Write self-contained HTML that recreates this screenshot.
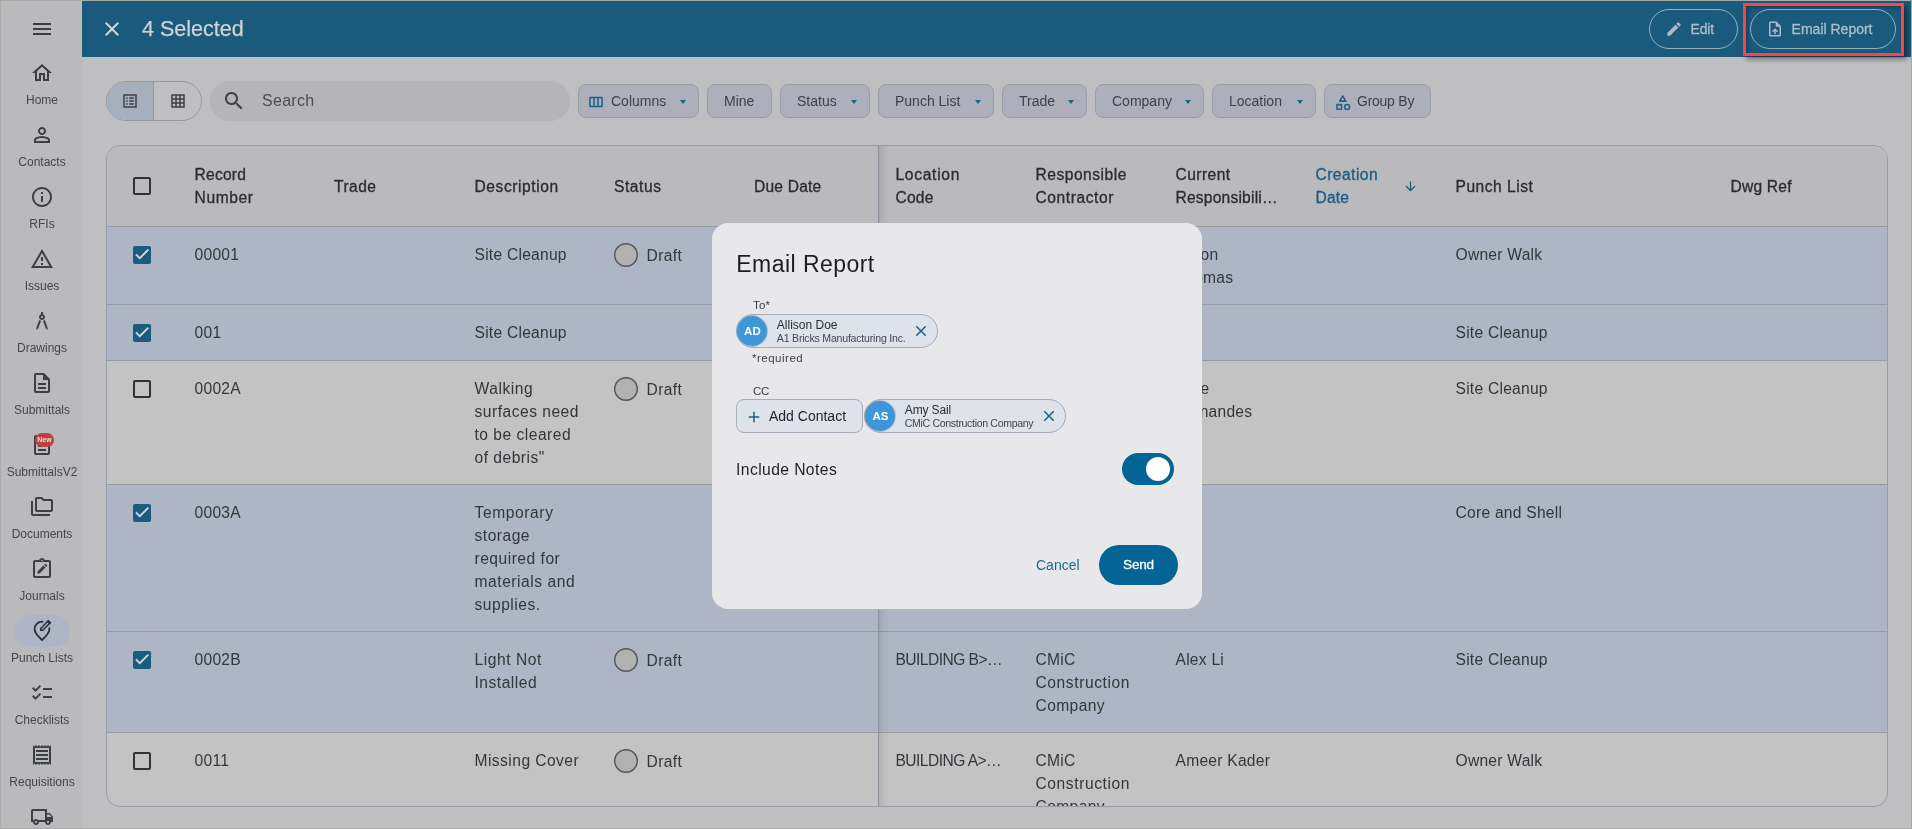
<!DOCTYPE html>
<html lang="en">
<head>
<meta charset="utf-8">
<title>Punch Lists - Email Report</title>
<style>
*{box-sizing:border-box;margin:0;padding:0}
html,body{width:1912px;height:829px;overflow:hidden;background:#bfbfc1}
body{font-family:"Liberation Sans",sans-serif;color:#35383c;position:relative}
#frame{will-change:transform;position:absolute;left:0;top:0;width:1912px;height:829px;overflow:hidden;background:#bfbfc1}
#edge{position:absolute;left:0;top:0;width:1912px;height:829px;border:1px solid #a9a9a9;z-index:50;pointer-events:none}
.abs{position:absolute}
/* sidebar */
#side{position:absolute;left:1px;top:1px;width:81px;height:827px;background:#bababc}
.nav{position:absolute;left:0;width:81px;text-align:center;font-size:12px;letter-spacing:0;color:#43464b;white-space:nowrap}
.nav svg{position:absolute;left:29px;top:0;width:24px;height:24px;fill:#3c3f44}
.nav span{position:absolute;left:-9.5px;width:101px;top:32px;line-height:14px;display:block}
.nav .new{position:absolute;left:34px;top:0;width:19px;height:14px;border-radius:7px;background:#bd423c;color:#eadedd;font-size:7px;line-height:14.5px;font-style:normal;font-weight:bold;letter-spacing:.1px;text-align:center}
/* top bar */
#top{position:absolute;left:82px;top:1px;width:1829px;height:56px;background:#195a7d}
#top .title{position:absolute;left:60px;top:14px;font-size:21.5px;line-height:28px;color:#d0d3d6;white-space:nowrap;-webkit-text-stroke:.25px #d0d3d6}
.tbtn{position:absolute;top:8px;height:40px;border:1px solid #97b0bf;border-radius:20px;color:#adbfce;font-size:14px;line-height:38px;white-space:nowrap;-webkit-text-stroke:.3px #adbfce}
/* toolbar */
.chip{position:absolute;top:84px;height:34px;border:1px solid #989da8;border-radius:8px;background:#adb0ba;font-size:14px;line-height:32px;color:#3f4246;white-space:nowrap}
.chip .lb{position:absolute;top:0}
.chip .car{position:absolute;top:15px;width:0;height:0;border-left:3.75px solid transparent;border-right:3.75px solid transparent;border-top:4px solid #1c6188}
/* table */
#tbl{position:absolute;left:106px;top:145px;width:1782px;height:662px;border:1px solid #979ca7;border-radius:14px;background:#c3c3c3;overflow:hidden}
.row{position:absolute;left:0;width:1780px;border-top:1px solid #979ca7}
.row.sel{background:#aeb5c4}
.hd{position:absolute;font-size:15.6px;line-height:23px;color:#2a2c30;letter-spacing:.2px;-webkit-text-stroke:.3px #2a2c30;white-space:nowrap}
.c{position:absolute;font-size:15.6px;line-height:23px;color:#33363b;letter-spacing:.25px;white-space:nowrap}
.cb{position:absolute;left:26px;width:18px;height:18px;border:2px solid #2f3236;border-radius:2px}
.cb.on{background:#1a5b80;border-color:#1a5b80}
.cb.on svg{position:absolute;left:-2px;top:-2.6px;width:18px;height:18px}
.st{position:absolute;width:24px;height:24px;border-radius:12px;box-shadow:inset 0 0 0 1.4px #56575a;background:#b1b1b1}
/* dialog */
#dlg{position:absolute;left:712px;top:223px;width:490px;height:386px;border-radius:16px;background:#e8e8ea;color:#1e2023}
.lbl{position:absolute;font-size:11.5px;line-height:14px;color:#3e4146;white-space:nowrap;letter-spacing:.2px}
.pchip{position:absolute;height:34px;border:1px solid #a4acb9;border-radius:17px;background:#dee2ea}
.pchip .av{position:absolute;left:.4px;top:1px;width:30px;height:30px;border-radius:15px;background:#3c96d7;color:#fff;font-size:11.5px;font-weight:bold;line-height:30px;text-align:center;box-shadow:0 0 0 1px rgba(150,158,170,.55)}
.pchip .nm{position:absolute;left:39.8px;top:3px;font-size:12px;line-height:14px;color:#2a2d31;white-space:nowrap}
.pchip .co{position:absolute;left:39.8px;top:16.900px;font-size:10.6px;letter-spacing:-.38px;line-height:13px;color:#45484d;white-space:nowrap}
.pchip .x{position:absolute;left:175px;top:7px;width:18px;height:18px;fill:#1c6188}
</style>
</head>
<body>
<div id="frame">
<div id="side">
<svg class="abs" style="left:29px;top:16px;width:24px;height:24px;fill:#3a3d42" viewBox="0 0 24 24"><path d="M3 18h18v-2H3v2zm0-5h18v-2H3v2zm0-7v2h18V6H3z"/></svg>
<div class="nav" style="top:60px"><svg viewBox="0 0 24 24"><path d="M12 5.69l5 4.5V18h-2v-6H9v6H7v-7.81l5-4.5M12 3L2 12h3v8h6v-6h2v6h6v-8h3L12 3z"/></svg><span>Home</span></div>
<div class="nav" style="top:122px"><svg viewBox="0 0 24 24"><path d="M12 12q-1.65 0-2.825-1.175T8 8q0-1.65 1.175-2.825T12 4q1.65 0 2.825 1.175T16 8q0 1.65-1.175 2.825T12 12Zm-8 8v-2.800q0-.85.438-1.563T5.600 14.550q1.550-.775 3.150-1.163T12 13q1.650 0 3.250.388t3.150 1.162q.725.375 1.163 1.088T20 17.200V20Zm2-2h12v-.8q0-.275-.138-.5t-.362-.35q-1.350-.675-2.725-1.012T12 15q-1.400 0-2.775.338T6.500 16.350q-.225.125-.363.350T6 17.200Zm6-8q.825 0 1.413-.588T14 8q0-.825-.588-1.413T12 6q-.825 0-1.413.588T10 8q0 .825.588 1.413T12 10Z"/></svg><span>Contacts</span></div>
<div class="nav" style="top:184px"><svg viewBox="0 0 24 24"><path d="M11 7h2v2h-2zm0 4h2v6h-2zm1-9C6.480 2 2 6.480 2 12s4.480 10 10 10 10-4.480 10-10S17.520 2 12 2zm0 18c-4.410 0-8-3.590-8-8s3.590-8 8-8 8 3.590 8 8-3.590 8-8 8z"/></svg><span>RFIs</span></div>
<div class="nav" style="top:246px"><svg viewBox="0 0 24 24"><path d="M12 5.990L19.530 19H4.470L12 5.990M12 2L1 21h22L12 2zm1 14h-2v2h2v-2zm0-6h-2v4h2v-4z"/></svg><span>Issues</span></div>
<div class="nav" style="top:308px"><svg viewBox="0 0 24 24"><path d="M6.360 18.780L6.610 21l1.620-1.540 2.770-7.600c-.68-.17-1.280-.51-1.770-.98l-2.870 7.900zm8.410-7.900c-.49.47-1.100.81-1.770.98l2.770 7.600L17.390 21l.26-2.220-2.880-7.900zM15 8c0-1.300-.84-2.400-2-2.820V3h-2v2.180C9.840 5.600 9 6.700 9 8c0 1.660 1.340 3 3 3s3-1.340 3-3zm-3 1c-.55 0-1-.45-1-1s.45-1 1-1 1 .45 1 1-.45 1-1 1z"/></svg><span>Drawings</span></div>
<div class="nav" style="top:370px"><svg viewBox="0 0 24 24"><path d="M8 16h8v2H8zm0-4h8v2H8zm6-10H6c-1.100 0-2 .9-2 2v16c0 1.100.89 2 1.990 2H18c1.100 0 2-.9 2-2V8l-6-6zm4 18H6V4h7v5h5v11z"/></svg><span>Submittals</span></div>
<div class="nav" style="top:432px"><svg viewBox="0 0 24 24"><path d="M8 16h8v2H8zm0-4h8v2H8zm6-10H6c-1.100 0-2 .9-2 2v16c0 1.100.89 2 1.990 2H18c1.100 0 2-.9 2-2V8l-6-6zm4 18H6V4h7v5h5v11z"/></svg><i class="new">New</i><span>SubmittalsV2</span></div>
<div class="nav" style="top:494px"><svg viewBox="0 0 24 24"><path d="M3 6H1v13c0 1.100.9 2 2 2h17v-2H3V6z M21 4h-7l-2-2H7c-1.100 0-1.990.9-1.990 2L5 15c0 1.100.9 2 2 2h14c1.100 0 2-.9 2-2V6c0-1.100-.9-2-2-2zm0 11H7V4h4.170l2 2H21v9z"/></svg><span>Documents</span></div>
<div class="nav" style="top:556px"><svg viewBox="0 0 24 24"><path d="M19 3h-4.180C14.400 1.840 13.300 1 12 1s-2.400.84-2.820 2H5c-1.100 0-2 .9-2 2v14c0 1.100.9 2 2 2h14c1.100 0 2-.9 2-2V5c0-1.100-.9-2-2-2zm-7-.25c.41 0 .75.34.75.75s-.34.75-.75.75-.75-.34-.75-.75.34-.75.75-.75zM19 19H5V5h14v14z"/><path d="M7.500 16.500v-2.100l5.900-5.900 2.100 2.100-5.900 5.900zM16.200 9.900l-2.100-2.100.9-.9c.2-.2.500-.2.700 0l1.400 1.400c.2.2.2.500 0 .7z"/></svg><span>Journals</span></div>
<div class="abs" style="left:13px;top:614px;width:56px;height:32px;border-radius:16px;background:#aeb6c6"></div>
<div class="nav" style="top:618px"><svg viewBox="0 0 24 24"><path fill="none" stroke="#2c2e32" stroke-width="1.800" stroke-linecap="butt" stroke-linejoin="round" d="M13.300 2.800C12.880 2.740 12.440 2.700 12 2.700 7.900 2.700 4.600 5.900 4.600 10c0 4.300 4.200 8.200 7.400 11 3.200-2.800 7.400-6.700 7.400-11 0-.55-.06-1.100-.17-1.600"/><path fill="none" stroke="#2c2e32" stroke-width="1.500" stroke-linejoin="miter" d="M10.800 11.200V9.300l7.500-7.500 1.900 1.900-7.500 7.500z"/><path fill="#2c2e32" d="M16.600 2.400l1.700-1.700 3 3-1.700 1.700z"/></svg><span>Punch Lists</span></div>
<div class="nav" style="top:680px"><svg viewBox="0 0 24 24"><path d="M22 7h-9v2h9V7zm0 8h-9v2h9v-2zM5.540 11L2 7.460l1.410-1.410 2.120 2.120 4.240-4.240 1.410 1.410L5.540 11zm0 8L2 15.460l1.410-1.410 2.120 2.120 4.240-4.240 1.410 1.410L5.540 19z"/></svg><span>Checklists</span></div>
<div class="nav" style="top:742px"><svg viewBox="0 0 24 24"><path d="M19.500 3.500L18 2l-1.500 1.500L15 2l-1.500 1.500L12 2l-1.500 1.500L9 2 7.500 3.500 6 2 4.500 3.500 3 2v20l1.500-1.500L6 22l1.500-1.500L9 22l1.500-1.500L12 22l1.500-1.500L15 22l1.500-1.500L18 22l1.500-1.500L21 22V2l-1.500 1.500zM19 19.090H5V4.910h14v14.180zM6 15h12v2H6zm0-4h12v2H6zm0-4h12v2H6z"/></svg><span>Requisitions</span></div>
<div class="nav" style="top:804px"><svg viewBox="0 0 24 24"><path d="M20 8h-3V4H3c-1.100 0-2 .9-2 2v11h2c0 1.660 1.340 3 3 3s3-1.340 3-3h6c0 1.660 1.340 3 3 3s3-1.340 3-3h2v-5l-3-4zm-.5 1.500l1.960 2.500H17V9.500h2.500zM6 18c-.55 0-1-.45-1-1s.45-1 1-1 1 .45 1 1-.45 1-1 1zm2.220-3c-.55-.61-1.330-1-2.220-1s-1.670.39-2.220 1H3V6h12v9H8.220zM18 18c-.55 0-1-.45-1-1s.45-1 1-1 1 .45 1 1-.45 1-1 1z"/></svg></div>
</div>
<div id="top">
<svg class="abs" style="left:18px;top:16px;width:24px;height:24px;fill:#d3d6d9" viewBox="0 0 24 24"><path d="M19 6.410L17.590 5 12 10.590 6.410 5 5 6.410 10.590 12 5 17.590 6.410 19 12 13.410 17.590 19 19 17.590 13.410 12 19 6.410z"/></svg>
<div class="title">4 Selected</div>
<div class="tbtn" style="left:1567px;width:89px"><svg class="abs" style="left:15px;top:10px;width:18px;height:18px;fill:#a9bccb" viewBox="0 0 24 24"><path d="M3 17.250V21h3.750L17.810 9.940l-3.750-3.750L3 17.250zM20.710 7.040c.39-.39.39-1.020 0-1.410l-2.340-2.340c-.39-.39-1.020-.39-1.410 0l-1.830 1.830 3.750 3.750 1.830-1.830z"/></svg><span class="abs" style="left:40.500px;top:-.5px;letter-spacing:-.2px">Edit</span></div>
<div class="abs" style="left:1661px;top:2px;width:161px;height:53px;border:3px solid #fb4545;box-shadow:3px 3px 5px rgba(0,0,0,.45), inset 2px 2px 4px rgba(0,0,0,.25)"></div>
<div class="tbtn" style="left:1668px;width:146px"><svg class="abs" style="left:15px;top:10px;width:18px;height:18px;fill:#a9bccb" viewBox="0 0 24 24"><path d="M14 2H6c-1.100 0-1.990.9-1.990 2L4 20c0 1.100.89 2 1.990 2H18c1.100 0 2-.9 2-2V8l-6-6zm4 18H6V4h7v5h5v11zM8 15.010l1.410 1.410L11 14.840V19h2v-4.160l1.590 1.590L16 15.010 12.010 11 8 15.010z"/></svg><span class="abs" style="left:40.600px;top:-.5px">Email Report</span></div>
</div>
<div id="main">
<div class="abs" style="left:106px;top:81px;width:96px;height:40px;border:1px solid #929aa6;border-radius:20px;background:#bfbfc1;overflow:hidden"><div class="abs" style="left:0;top:0;width:47px;height:38px;background:#a6b0bd;border-right:1px solid #929aa6"></div>
<svg class="abs" style="left:14px;top:10px;width:18px;height:18px;fill:#3d4045" viewBox="0 0 24 24"><path d="M3 3v18h18V3H3zm16 16H5V5h14v14z"/><path d="M7 7h2v2H7zm4 0h6v2h-6zM7 11h2v2H7zm4 0h6v2h-6zM7 15h2v2H7zm4 0h6v2h-6z"/></svg>
<svg class="abs" style="left:62px;top:10px;width:18px;height:18px;fill:#3d4045" viewBox="0 0 24 24"><path d="M3 3v18h18V3H3zm5.330 16H5v-3.330h3.330V19zm0-5.330H5v-3.340h3.330v3.340zm0-5.340H5V5h3.330v3.330zm5.340 10.670h-3.340v-3.330h3.340V19zm0-5.330h-3.340v-3.340h3.340v3.340zm0-5.340h-3.340V5h3.340v3.330zM19 19h-3.330v-3.330H19V19zm0-5.330h-3.330v-3.340H19v3.340zm0-5.340h-3.330V5H19v3.330z"/></svg></div>
<div class="abs" style="left:210px;top:81px;width:360px;height:40px;border-radius:20px;background:#b5b5b7"><svg class="abs" style="left:12px;top:8px;width:24px;height:24px;fill:#3d4045" viewBox="0 0 24 24"><path d="M15.500 14h-.79l-.28-.27C15.410 12.590 16 11.110 16 9.500 16 5.910 13.090 3 9.500 3S3 5.910 3 9.500 5.910 16 9.500 16c1.610 0 3.090-.59 4.230-1.570l.27.28v.79l5 4.990L20.490 19l-4.990-5zm-6 0C7.010 14 5 11.990 5 9.500S7.010 5 9.500 5 14 7.010 14 9.500 11.990 14 9.500 14z"/></svg><span class="abs" style="left:52px;top:8px;font-size:16px;line-height:24px;letter-spacing:.3px;color:#4a4d52">Search</span></div>
<div class="chip" style="left:578px;width:121px"><svg class="abs" style="left:10px;top:10px;width:14px;height:14px" viewBox="0 0 14 14"><path fill="none" stroke="#1c6188" stroke-width="1.500" d="M1 2.500h12v9H1zM5 2.500v9M9 2.500v9"/></svg><span class="lb" style="left:32px">Columns</span><i class="car" style="left:101px"></i></div>
<div class="chip" style="left:707px;width:65px"><span class="lb" style="left:16px">Mine</span></div>
<div class="chip" style="left:780px;width:90px"><span class="lb" style="left:16px">Status</span><i class="car" style="left:70px"></i></div>
<div class="chip" style="left:878px;width:116px"><span class="lb" style="left:16px">Punch List</span><i class="car" style="left:96px"></i></div>
<div class="chip" style="left:1002px;width:85px"><span class="lb" style="left:16px">Trade</span><i class="car" style="left:65px"></i></div>
<div class="chip" style="left:1095px;width:109px"><span class="lb" style="left:16px">Company</span><i class="car" style="left:89px"></i></div>
<div class="chip" style="left:1212px;width:104px"><span class="lb" style="left:16px">Location</span><i class="car" style="left:84px"></i></div>
<div class="chip" style="left:1324px;width:107px"><svg class="abs" style="left:8.500px;top:8.500px;width:17.500px;height:17.500px" viewBox="0 0 16 16"><path fill="none" stroke="#1c6188" stroke-width="1.400" stroke-linejoin="round" d="M8 1.800L10.800 6.500H5.200zM2.700 9.700h4.200v4.200H2.700z"/><circle cx="12" cy="11.800" r="2.300" fill="none" stroke="#1c6188" stroke-width="1.400"/></svg><span class="lb" style="left:32px;letter-spacing:-.25px">Group By</span></div>
</div>
<div id="tbl">
<div class="row" style="top:0;height:80px;border-top:0;background:#bababc">
<div class="cb" style="top:31px"></div>
<div class="hd" style="left:87.6px;top:17px;">Record<br><span style="letter-spacing:0.6px">Number</span></div>
<div class="hd" style="left:227px;top:28.5px;"><span style="letter-spacing:0.45px">Trade</span></div>
<div class="hd" style="left:367.5px;top:28.5px;"><span style="letter-spacing:0.57px">Description</span></div>
<div class="hd" style="left:507px;top:28.5px;"><span style="letter-spacing:0.55px">Status</span></div>
<div class="hd" style="left:647px;top:28.5px;">Due Date</div>
<div class="hd" style="left:788.5px;top:17px;"><span style="letter-spacing:0.7px">Location</span><br>Code</div>
<div class="hd" style="left:928.5px;top:17px;"><span style="letter-spacing:0.5px">Responsible</span><br><span style="letter-spacing:0.57px">Contractor</span></div>
<div class="hd" style="left:1068.5px;top:17px;"><span style="letter-spacing:0.43px">Current</span><br>Responsibili…</div>
<div class="hd" style="left:1208.5px;top:17px;color:#185c84;-webkit-text-stroke-color:#185c84"><span style="letter-spacing:0.45px">Creation</span><br>Date</div>
<svg class="abs" style="left:1295.500px;top:32.500px;width:15px;height:15px;fill:#185c84" viewBox="0 0 24 24"><path d="M20 12l-1.410-1.410L13 16.170V4h-2v12.170l-5.580-5.590L4 12l8 8 8-8z"/></svg>
<div class="hd" style="left:1348.5px;top:28.5px;"><span style="letter-spacing:0.5px">Punch List</span></div>
<div class="hd" style="left:1623.5px;top:28.5px;">Dwg Ref</div>
</div>
<div class="row sel" style="top:80px;height:78px"><div class="cb on" style="top:19px"><svg viewBox="0 0 24 24"><path fill="#dcdddf" stroke="#dcdddf" stroke-width=".6" d="M9 16.170L4.830 12l-1.420 1.410L9 19 21 7l-1.410-1.410L9 16.170z"/></svg></div><div class="c" style="left:87.6px;top:16px">00001</div><div class="c" style="left:367.5px;top:16px">Site Cleanup</div><div class="st" style="left:507px;top:16px"></div><div class="c" style="left:539.5px;top:17px;letter-spacing:.4px">Draft</div><div class="c" style="left:788.5px;top:16px"><span style="letter-spacing:-.55px">BUILDING A>…</span></div><div class="c" style="left:1068.5px;top:16px">Jason<br>Thomas</div><div class="c" style="left:1348.5px;top:16px">Owner Walk</div></div>
<div class="row sel" style="top:158px;height:56px"><div class="cb on" style="top:19px"><svg viewBox="0 0 24 24"><path fill="#dcdddf" stroke="#dcdddf" stroke-width=".6" d="M9 16.170L4.830 12l-1.420 1.410L9 19 21 7l-1.410-1.410L9 16.170z"/></svg></div><div class="c" style="left:87.6px;top:16px">001</div><div class="c" style="left:367.5px;top:16px">Site Cleanup</div><div class="c" style="left:1348.5px;top:16px">Site Cleanup</div></div>
<div class="row" style="top:214px;height:124px"><div class="cb" style="top:19px"></div><div class="c" style="left:87.6px;top:16px">0002A</div><div class="c" style="left:367.5px;top:16px"><span style="letter-spacing:0.55px">Walking</span><br><span style="letter-spacing:0.5px">surfaces need</span><br><span style="letter-spacing:0.5px">to be cleared</span><br><span style="letter-spacing:0.5px">of debris"</span></div><div class="st" style="left:507px;top:16px"></div><div class="c" style="left:539.5px;top:17px;letter-spacing:.4px">Draft</div><div class="c" style="left:788.5px;top:16px"><span style="letter-spacing:-.55px">BUILDING A>…</span></div><div class="c" style="left:928.5px;top:16px">CMiC<br><span style="letter-spacing:0.58px">Construction</span><br><span style="letter-spacing:0.4px">Company</span></div><div class="c" style="left:1068.5px;top:16px">Jose<br>Fernandes</div><div class="c" style="left:1348.5px;top:16px">Site Cleanup</div></div>
<div class="row sel" style="top:338px;height:147px"><div class="cb on" style="top:19px"><svg viewBox="0 0 24 24"><path fill="#dcdddf" stroke="#dcdddf" stroke-width=".6" d="M9 16.170L4.830 12l-1.420 1.410L9 19 21 7l-1.410-1.410L9 16.170z"/></svg></div><div class="c" style="left:87.6px;top:16px">0003A</div><div class="c" style="left:367.5px;top:16px"><span style="letter-spacing:0.6px">Temporary</span><br><span style="letter-spacing:0.5px">storage</span><br><span style="letter-spacing:0.5px">required for</span><br><span style="letter-spacing:0.55px">materials and</span><br><span style="letter-spacing:0.5px">supplies.</span></div><div class="c" style="left:1348.5px;top:16px">Core and Shell</div></div>
<div class="row sel" style="top:485px;height:101px"><div class="cb on" style="top:19px"><svg viewBox="0 0 24 24"><path fill="#dcdddf" stroke="#dcdddf" stroke-width=".6" d="M9 16.170L4.830 12l-1.420 1.410L9 19 21 7l-1.410-1.410L9 16.170z"/></svg></div><div class="c" style="left:87.6px;top:16px">0002B</div><div class="c" style="left:367.5px;top:16px"><span style="letter-spacing:0.55px">Light Not</span><br><span style="letter-spacing:0.5px">Installed</span></div><div class="st" style="left:507px;top:16px"></div><div class="c" style="left:539.5px;top:17px;letter-spacing:.4px">Draft</div><div class="c" style="left:788.5px;top:16px"><span style="letter-spacing:-.55px">BUILDING B>…</span></div><div class="c" style="left:928.5px;top:16px">CMiC<br><span style="letter-spacing:0.58px">Construction</span><br><span style="letter-spacing:0.4px">Company</span></div><div class="c" style="left:1068.5px;top:16px">Alex Li</div><div class="c" style="left:1348.5px;top:16px">Site Cleanup</div></div>
<div class="row" style="top:586px;height:101px"><div class="cb" style="top:19px"></div><div class="c" style="left:87.6px;top:16px">0011</div><div class="c" style="left:367.5px;top:16px"><span style="letter-spacing:0.45px">Missing Cover</span></div><div class="st" style="left:507px;top:16px"></div><div class="c" style="left:539.5px;top:17px;letter-spacing:.4px">Draft</div><div class="c" style="left:788.5px;top:16px"><span style="letter-spacing:-.55px">BUILDING A>…</span></div><div class="c" style="left:928.5px;top:16px">CMiC<br><span style="letter-spacing:0.58px">Construction</span><br><span style="letter-spacing:0.4px">Company</span></div><div class="c" style="left:1068.5px;top:16px">Ameer Kader</div><div class="c" style="left:1348.5px;top:16px">Owner Walk</div></div>
<div class="abs" style="left:771px;top:0;width:1px;height:662px;background:#8c919b"></div>
<div class="abs" style="left:772px;top:0;width:10px;height:662px;background:linear-gradient(90deg,rgba(0,0,0,.09),rgba(0,0,0,.03) 50%,rgba(0,0,0,0))"></div>
</div>
<div id="dlg">
<div class="abs" style="left:24.300px;top:27px;font-size:23px;line-height:28px;letter-spacing:.45px;color:#1c1e21;white-space:nowrap">Email Report</div>
<div class="lbl" style="left:41px;top:75px">To*</div>
<div class="pchip" style="left:24px;top:91px;width:202px"><div class="av">AD</div><div class="nm" style="letter-spacing:0">Allison Doe</div><div class="co" style="letter-spacing:-.22px">A1 Bricks Manufacturing Inc.</div><svg class="x" viewBox="0 0 24 24"><path d="M19 6.410L17.590 5 12 10.590 6.410 5 5 6.410 10.590 12 5 17.590 6.410 19 12 13.410 17.590 19 19 17.590 13.410 12 19 6.410z"/></svg></div>
<div class="lbl" style="left:40px;top:128px;letter-spacing:.5px">*required</div>
<div class="lbl" style="left:41px;top:160.500px;letter-spacing:-.3px">CC</div>
<div class="abs" style="left:24px;top:176px;width:127px;height:34px;border:1px solid #a4acb9;border-radius:8px;background:#dee2ea"><svg class="abs" style="left:8px;top:7.500px;width:18px;height:18px;fill:#1c6188" viewBox="0 0 24 24"><path d="M19 13h-6v6h-2v-6H5v-2h6V5h2v6h6v2z"/></svg><span class="abs" style="left:32px;top:0;font-size:14px;line-height:32px;letter-spacing:0;color:#222529;white-space:nowrap">Add Contact</span></div>
<div class="pchip" style="left:152px;top:176px;width:202px"><div class="av">AS</div><div class="nm" style="letter-spacing:-.15px">Amy Sail</div><div class="co" style="letter-spacing:-.35px">CMiC Construction Company</div><svg class="x" viewBox="0 0 24 24"><path d="M19 6.410L17.590 5 12 10.590 6.410 5 5 6.410 10.590 12 5 17.590 6.410 19 12 13.410 17.590 19 19 17.590 13.410 12 19 6.410z"/></svg></div>
<div class="abs" style="left:24px;top:235px;font-size:15.700px;line-height:23px;letter-spacing:.4px;color:#1f2124;white-space:nowrap">Include Notes</div>
<div class="abs" style="left:410px;top:230px;width:52px;height:32px;border-radius:16px;background:#046495"><div class="abs" style="left:23.500px;top:4px;width:24px;height:24px;border-radius:12px;background:#fff"></div></div>
<div class="abs" style="left:324px;top:331px;font-size:14px;line-height:22px;letter-spacing:0;color:#1b6a96;white-space:nowrap">Cancel</div>
<div class="abs" style="left:387px;top:322px;width:79px;height:40px;border-radius:20px;background:#046495;color:#fff;font-size:13.600px;line-height:40px;text-align:center;letter-spacing:-.2px;-webkit-text-stroke:.3px #fff">Send</div>
</div>
<div id="edge"></div>
</div>
</body>
</html>
